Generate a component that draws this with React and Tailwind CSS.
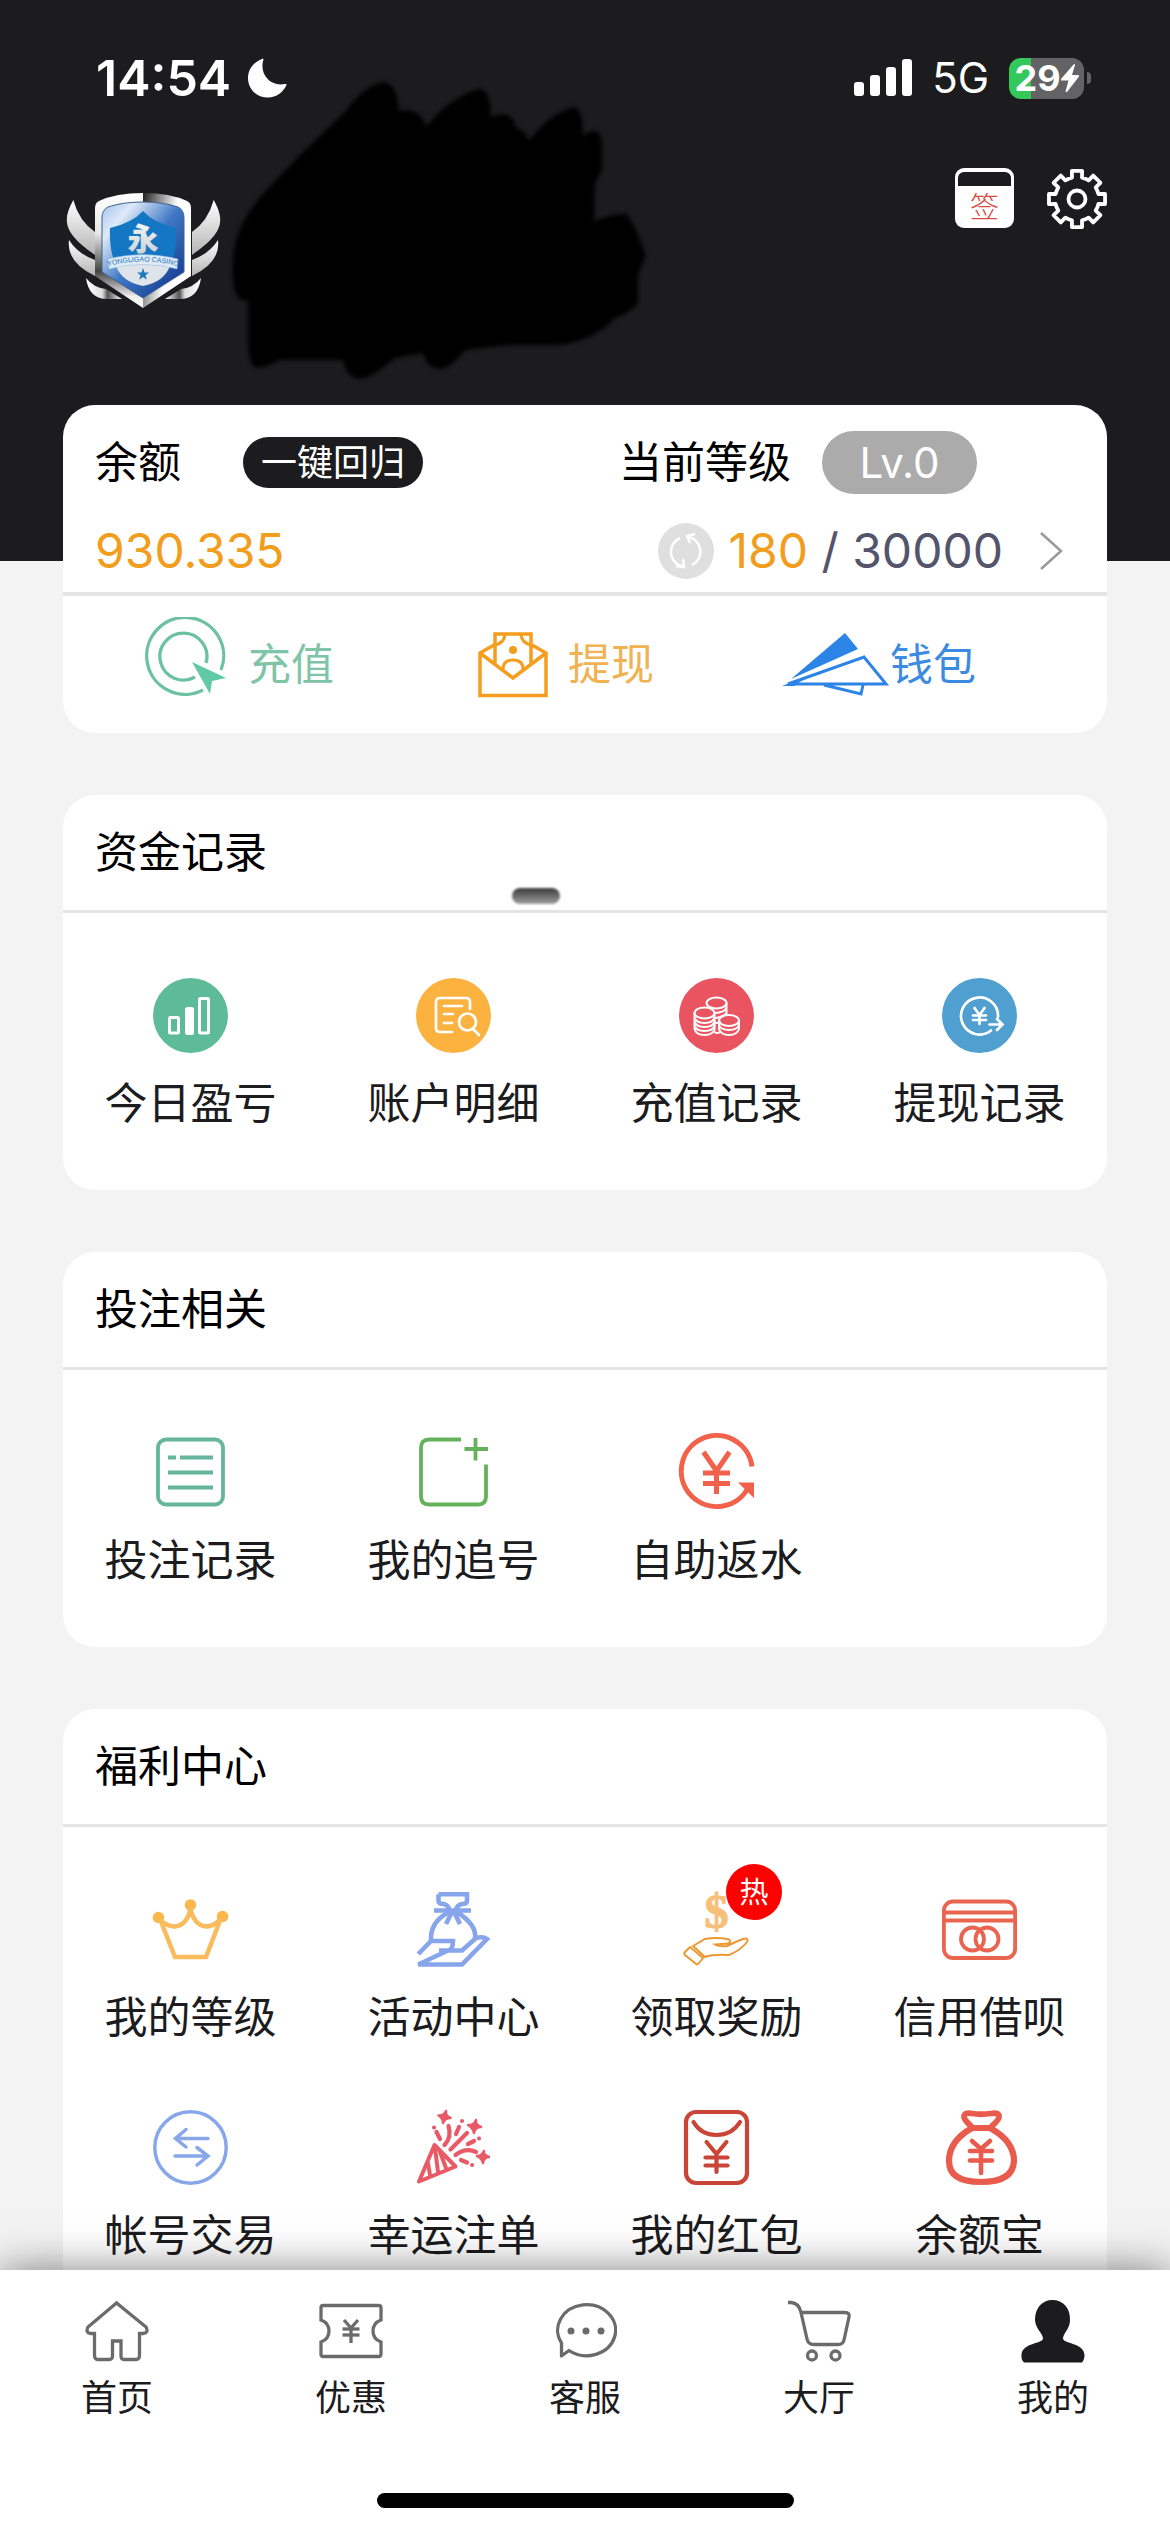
import React from "react";

const latin = "font-['Inter','Noto_Sans_CJK_SC',sans-serif]";

function Yen({ x = 37.5, top, mid, bottom, half, barHalf, bars }) {
  return (
    <>
      <path d={`M${x - half} ${top}L${x} ${mid}L${x + half} ${top}M${x} ${mid}V${bottom}`} />
      {bars.map((y) => (
        <path key={y} d={`M${x - barHalf} ${y}H${x + barHalf}`} />
      ))}
    </>
  );
}

function Icon({ children, color, sw = 3, cap = "butt" }) {
  return (
    <svg
      viewBox="0 0 75 75"
      className="size-[75px] shrink-0 overflow-visible"
      fill="none"
      stroke={color}
      strokeWidth={sw}
      strokeLinecap={cap}
      aria-hidden="true"
    >
      {children}
    </svg>
  );
}

function Disc({ fill, children, sw = 2.7 }) {
  return (
    <Icon color="#fff" sw={sw} cap="round">
      <circle cx="37.5" cy="37.5" r="37.5" fill={fill} stroke="none" />
      {children}
    </Icon>
  );
}

const ProfitIcon = () => (
  <Disc fill="#5dbb9a" sw={3}>
    <rect x="16.5" y="39.5" width="9" height="15.5" rx="1" />
    <rect x="33.5" y="30.500" width="6" height="25" rx="1" fill="#fff" />
    <rect x="46.5" y="20.5" width="9" height="34.5" rx="1" />
  </Disc>
);
const DetailIcon = () => (
  <Disc fill="#fbb23f">
    <path d="M54 31V24q0-4-4-4H24q-4 0-4 4V50q0 4 4 4H36M28 28H46M28 36H37M28 45H36" />
    <circle cx="51.5" cy="44" r="8.500" />
    <path d="M57 51L63 57" />
  </Disc>
);
const CoinsIcon = () => (
  <Disc fill="#e95460" sw={2}>
    <path d="M47.5 25V36M47.5 30Q45 34.500 36 35M47.5 35Q44 39 37 40M35.5 35V51M37 45Q40 45 41 44" />
    <ellipse cx="37.5" cy="25" rx="10" ry="5.5" />
    <ellipse cx="25.5" cy="35" rx="10" ry="5.5" />
    <path d="M15.5 35V51Q17 57 25.5 57T35.5 51M15.5 39.5Q17 45 25.5 45T35.5 39.5M15.5 43.5Q17 49 25.5 49T35.5 43.5M15.5 47.5Q17 53 25.5 53T35.5 47.5" />
    <ellipse cx="50" cy="42.5" rx="10" ry="5.5" />
    <path d="M40 42.5V51Q42 57 50 57T60 51V42.5M40 47Q42 52 50 52T60 47" />
    <path d="M35.5 54Q38 56 41 54" />
  </Disc>
);
const WithdrawLogIcon = () => (
  <Disc fill="#4f9fd0">
    <path d="M56 39A18.5 18.5 0 1 0 49 52.500M47.500 46.5H60M55 41L60.5 46.5L55 52" />
    <Yen top={30} mid={37} bottom={46} half={5} barHalf={6.5} bars={[37.5, 42]} />
  </Disc>
);
const BetLogIcon = () => (
  <Icon color="#65b69c" sw={3.8}>
    <rect x="5" y="4.500" width="65" height="65" rx="8" />
    <path d="M15 22.500H23M27 22.500H60M15 37.500H60M15 52.500H60" />
  </Icon>
);
const ChaseIcon = () => (
  <Icon color="#66b15c" sw={3.8}>
    <path d="M45 4.500H13Q5 4.500 5 12.500V61.500Q5 69.500 13 69.500H62Q70 69.500 70 61.500V29.500M59.5 3V25.500M48.5 14H72" />
  </Icon>
);
const RebateIcon = () => (
  <Icon color="#f2614a" sw={5}>
    <path d="M73 31.500A35.5 35.5 0 1 0 70 51" />
    <path d="M59 47.500H75V63Z" fill="#f2614a" stroke="none" />
    <Yen top={17} mid={36} bottom={59} half={13} barHalf={13.5} bars={[38, 48.5]} />
  </Icon>
);
const CrownIcon = () => (
  <Icon color="#f9bb5b" sw={4.5}>
    <g fill="#fbb64c" stroke="none">
      <circle cx="5.5" cy="25.500" r="5.8" />
      <circle cx="37.5" cy="13" r="5.8" />
      <circle cx="69.5" cy="24.500" r="5.8" />
    </g>
    <path d="M7 27L22 65H53L68 26M8 29Q15 34.500 22 34.500Q34 33 37.5 17Q41 33 53 34.500Q60 34.500 67 28" />
  </Icon>
);
const ActivityIcon = () => (
  <Icon color="#87a5eb" sw={4.6}>
    <path d="M22.5 2.300H51V9Q51 12 46 12Q41 13 40 18M22.5 2.300V9Q22.5 12 28 12Q32 13 33.5 18M18 18.5H55" />
    <path d="M33 20Q14 30 15 48M41 20Q61 33 59 46M36 20L30 32M38 20L44 32" />
    <path d="M2.300 62L15 49H37Q37 58 32 58.500H23M32 58.500H46L60 46Q67 44 71 47L46 72.500H2.300Z" />
  </Icon>
);
const RewardIcon = () => (
  <Icon color="#ed9733" sw={2}>
    <text
      x="37.5"
      y="36"
      fontSize="48"
      textAnchor="middle"
      strokeWidth="1.200"
      stroke="#f6c07a"
      fill="#f6c07a"
      className="font-['Liberation_Serif',serif] font-bold"
    >
      $
    </text>
    <path d="M11 55L6 60Q4.5 61.500 6 63L17 72Q18.500 73 20 71L24 66Z" />
    <path d="M14 54L26 47Q38 45 50 47.500Q53 50 49 51.500L36 52.500Q40 55 48 54Q56 50 64 47Q70 45 68 50Q62 58 50 63Q34 62 26 65Z" />
  </Icon>
);
const CreditIcon = () => (
  <Icon color="#e9654f" sw={3.8}>
    <rect x="1.9" y="9.500" width="71.200" height="56.500" rx="9" />
    <path d="M2 20.500H73M2 28.500H73" />
    <circle cx="30.5" cy="47" r="11.5" />
    <circle cx="45" cy="47" r="11.5" />
  </Icon>
);
const TradeIcon = () => (
  <Icon color="#87a7ea" sw={3.5} cap="round">
    <circle cx="37.5" cy="37.5" r="35.7" />
    <path d="M33 19.500L22.5 28.500L33 37M23 28.500H55M44 37.500L55 46L44 55M22 46H54" />
  </Icon>
);
const PartyIcon = () => (
  <Icon color="#ea5a66" sw={4} cap="round">
    <path d="M3 71.500L18.5 35L39.5 56.500ZM12 53L14 65M19 38L22 62M24 42L30 58" strokeLinejoin="round" />
    <path d="M28.5 35Q36 27 32.5 16M34.500 39.500L51 23M39.5 45Q50 37 60 42M20.500 22L24 29M43 17L40 24M52 34L58 31M45 50L51 52.500" strokeWidth="4.200" />
    <path d="M18 17.500h.1M46 11h.1M63 28.500h.1M56 55h.1" strokeWidth="4" />
    <g fill="#ea5a66" strokeWidth="2.500" strokeLinejoin="round">
      <path d="M30 1Q29 6 34.5 8Q29 8 27 13Q27 8 22.5 5.500Q28 6 30 1Z" />
      <path d="M60 10Q59 15 65 17Q59 17 58 23Q57 18 52 15Q58 16 60 10Z" />
      <path d="M68 41Q67 45 73 47Q68 47 67 53Q66 48 61 46Q66 46 68 41Z" />
    </g>
  </Icon>
);
const RedPacketIcon = () => (
  <Icon color="#c94538" sw={4.2} cap="round">
    <rect x="7" y="2" width="61" height="71" rx="10" />
    <path d="M14.5 12Q22 25 37.5 25T61 12" />
    <Yen top={32} mid={44} bottom={62} half={10} barHalf={11} bars={[47.5, 55.5]} />
  </Icon>
);
const SavingsIcon = () => (
  <Icon color="#e95b4c" sw={4.6} cap="round">
    <path
      d="M29 16Q20 8 22.5 5Q24 2.500 30 3.500Q39 5 49 3.500Q56 2.500 57 5.500Q58 9 50 16"
      strokeWidth="5.800"
    />
    <path
      d="M30 18Q7 31 7 51Q7 72 39 72T72 51Q72 31 48 18Z"
      strokeWidth="6.200"
      strokeLinejoin="round"
    />
    <Yen x={39} top={31} mid={39} bottom={63} half={9} barHalf={11} bars={[41, 50.5]} />
  </Icon>
);

const sections = [
  {
    title: "资金记录",
    smudge: true,
    items: [
      ["今日盈亏", ProfitIcon],
      ["账户明细", DetailIcon],
      ["充值记录", CoinsIcon],
      ["提现记录", WithdrawLogIcon],
    ],
  },
  {
    title: "投注相关",
    items: [
      ["投注记录", BetLogIcon],
      ["我的追号", ChaseIcon],
      ["自助返水", RebateIcon],
    ],
  },
  {
    title: "福利中心",
    items: [
      ["我的等级", CrownIcon],
      ["活动中心", ActivityIcon],
      ["领取奖励", RewardIcon, "热"],
      ["信用借呗", CreditIcon],
      ["帐号交易", TradeIcon],
      ["幸运注单", PartyIcon],
      ["我的红包", RedPacketIcon],
      ["余额宝", SavingsIcon],
    ],
  },
];

function Section({ title, items, smudge }) {
  return (
    <section className="mt-[62px] rounded-[32px] bg-white">
      <div className="relative border-b-[3px] border-[#e4e4e4] px-8 py-[26px]">
        <h2 className="text-[43px] leading-[63px] text-black">{title}</h2>
        {smudge && (
          <span className="absolute top-[93px] left-[449px] h-4 w-12 rounded-[8px] bg-linear-to-b from-[#3c3c3c] to-[#a0a0a0] blur-[1px]" />
        )}
      </div>
      <div className="grid grid-cols-4 gap-x-2 gap-y-[62px] pt-[65px] pb-14">
        {items.map(([label, Glyph, badge]) => (
          <button key={label} type="button" className="flex flex-col items-center gap-5">
            <span className="relative">
              <Glyph />
              {badge && (
                <span className="absolute -top-7 -right-7 flex size-14 items-center justify-center rounded-full bg-[#fe0000] text-[29px] leading-none text-white">
                  {badge}
                </span>
              )}
            </span>
            <span className="text-[43px] leading-[61px] whitespace-nowrap text-[#1c1c1e]">{label}</span>
          </button>
        ))}
      </div>
    </section>
  );
}

function Wing() {
  return (
    <g>
      <path d="M7.3 8C-5 30-1 42 29 63V40Q13 29 7.3 8Z" fill="url(#wing)" />
      <path d="M3 48Q0 70 29 84V68Q12 62 3 48Z" fill="url(#wing)" />
      <path d="M20 86Q23 108 43 107H56L40 97Q28 96 20 86Z" fill="url(#foot)" />
    </g>
  );
}

function Logo() {
  return (
    <svg viewBox="0 0 156 117" className="h-[117px] w-[156px] shrink-0" role="img" aria-label="YONGLIGAO CASINO">
      <defs>
        <linearGradient id="wing" x1="0" y1="0" x2="0" y2="1">
          <stop offset="0" stopColor="#fff" />
          <stop offset="1" stopColor="#b4b4b4" />
        </linearGradient>
        <linearGradient id="foot">
          <stop offset="0" stopColor="#fff" />
          <stop offset=".45" stopColor="#ddd" />
          <stop offset=".6" stopColor="#555" />
          <stop offset="1" stopColor="#fff" />
        </linearGradient>
        <linearGradient id="rimLeft" x1="0" y1="0" x2="0" y2="1">
          <stop offset="0" stopColor="#fff" />
          <stop offset=".35" stopColor="#e8e8e8" />
          <stop offset=".68" stopColor="#444" />
          <stop offset=".9" stopColor="#eee" />
          <stop offset="1" stopColor="#fff" />
        </linearGradient>
        <linearGradient id="rimRight" x1="0" y1="0" x2="1" y2=".4">
          <stop offset="0" stopColor="#222" />
          <stop offset=".4" stopColor="#aaa" />
          <stop offset=".65" stopColor="#fff" />
        </linearGradient>
        <linearGradient id="field" x1="0" y1="0" x2="1" y2="1">
          <stop offset="0" stopColor="#9fc3ec" />
          <stop offset=".2" stopColor="#dfeaf8" />
          <stop offset=".5" stopColor="#3f79c6" />
          <stop offset="1" stopColor="#0a2c86" />
        </linearGradient>
        <linearGradient id="mark" x1="0" y1="0" x2="0" y2="1">
          <stop offset="0" stopColor="#fff" />
          <stop offset="1" stopColor="#c8ccd2" />
        </linearGradient>
        <path id="ribbon" d="M43 74Q77 65 111 74" />
      </defs>
      <Wing />
      <g transform="translate(155 0) scale(-1 1)">
        <Wing />
      </g>
      <path d="M77 1Q50 1 33 9Q29 11 29 16V84L77 116Z" fill="url(#rimLeft)" />
      <path d="M77 1Q104 1 121 9Q125 11 125 16V84L77 116Z" fill="url(#rimRight)" />
      <path
        d="M77 10Q57 10 42 15Q36 18 36 26V80L77 106L118 80V26Q118 18 112 15Q97 10 77 10Z"
        fill="url(#field)"
        stroke="#41628f"
      />
      <path d="M77 19Q66 31 44 36Q42 86 77 94Q112 86 110 36Q88 31 77 19Z" fill="#1477c4" />
      <path d="M50 74Q56 90 77 94Q98 90 104 74Q77 66 50 74Z" fill="#dfe3ea" />
      <path d="M42 67Q77 58 112 67L111 77Q77 68 43 77Z" fill="#dcebf6" stroke="#8fb9dc" strokeWidth=".5" />
      <text
        x="77"
        y="58"
        textAnchor="middle"
        fontSize="31"
        fill="url(#mark)"
        className="font-['Noto_Sans_CJK_SC',sans-serif] font-black"
      >
        永
      </text>
      <text fontSize="7" fill="#2c74b8" className="font-['Liberation_Sans',sans-serif]">
        <textPath href="#ribbon" startOffset="50%" textAnchor="middle">
          YONGLIGAO CASINO
        </textPath>
      </text>
      <path d="M77 76L78.500 80.500H83L79.500 83.300L80.800 87.800L77 85L73.200 87.800L74.500 83.300L71 80.500H75.500Z" fill="#1f78be" />
    </svg>
  );
}

function Scribble() {
  return (
    <svg
      viewBox="228 76 424 310"
      className="pointer-events-none absolute top-[76px] left-[228px] h-[310px] w-[424px] overflow-visible blur-[2px]"
      aria-hidden="true"
    >
      <path
        fill="#000"
        d="M254 367Q248 360 248 335V300Q238 304 234 288Q231 270 234 250Q237 225 262 195L300 155L345 112Q365 84 384 82Q397 84 399 111Q420 107 426 127Q448 99 478 89Q491 88 491 117Q512 108 516 128Q526 131 529 141Q548 115 573 107Q583 107 583 136Q601 122 602 145V170L595 183L594 222Q608 214 627 214L636 230L646 255L638 275V303Q632 312 615 318Q595 340 560 345H510L465 350Q450 369 440 369Q427 368 423 353L395 358Q370 379 358 379Q346 376 343 360H280Q262 370 254 367Z"
      />
    </svg>
  );
}

function StatusBar() {
  return (
    <div className="flex h-[60px] items-center pr-[79px] pl-24 text-white">
      <span className="text-[50px] leading-[60px] font-semibold">14:54</span>
      <svg viewBox="0 0 40 40" className="ml-4 size-10" fill="#fff" aria-hidden="true">
        <path d="M15 1Q16 0 16.500 1.500C12 15 22 29 38 26Q40 25.500 39.500 27C36 34.500 29.500 39.500 21 39.500C9.500 39.500 1 31 1 20C1 11.500 6 4.500 15 1Z" />
      </svg>
      <svg viewBox="0 0 58 38" className="ml-auto h-[38px] w-[58px]" fill="#fff" aria-hidden="true">
        <rect x="0" y="23" width="10" height="14" rx="3" />
        <rect x="16" y="16" width="10" height="21" rx="3" />
        <rect x="32" y="8" width="10" height="29" rx="3" />
        <rect x="48" y="0" width="10" height="37" rx="3" />
      </svg>
      <span className="ml-5 text-[42px] leading-[60px]">5G</span>
      <span className="ml-5 flex h-[41px] w-[75px] items-center justify-center overflow-hidden rounded-[12px] bg-[linear-gradient(90deg,#34c759_29%,#636365_29%)] text-[36px] leading-none font-bold">
        29
        <svg viewBox="0 0 18 28" className="h-7 w-[18px]" fill="#fff" aria-hidden="true">
          <path d="M13 0L0 15Q-.5 16.500 1 16.500H7.500L4.500 27.500Q5 28.500 6 28L18 12.500Q18.500 11 17 11H11L14 1Q14 0 13 0Z" />
        </svg>
      </span>
      <span className="ml-[3px] h-3 w-1 rounded-r-full bg-[#636365]" />
    </div>
  );
}

function GearIcon() {
  const teeth = [];
  const root = 22;
  const tip = 28.5;
  for (let i = 0; i < 8; i++) {
    const a = (i * Math.PI) / 4;
    const p = (r, d) => `${31 + r * Math.sin(a + d)} ${31 - r * Math.cos(a + d)}`;
    teeth.push(`${p(root, -0.23)}L${p(tip, -0.18)}L${p(tip, 0.18)}L${p(root, 0.23)}`);
  }
  return (
    <svg viewBox="0 0 62 62" className="size-[62px]" fill="none" stroke="#fff" strokeWidth="3.8" strokeLinejoin="round" aria-hidden="true">
      <path d={`M${teeth.join(`A${root} ${root} 0 0 1 `)}A${root} ${root} 0 0 1 ${31 + root * Math.sin(-0.23)} ${31 - root * Math.cos(0.23)}Z`} />
      <circle cx="31" cy="31" r="8.5" />
    </svg>
  );
}

function BalanceCard() {
  return (
    <section className="-mt-[156px] rounded-[32px] bg-white">
      <div className="border-b-4 border-[#e4e4e4] pt-[26px] pb-[13px] pl-8">
        <div className="flex h-[63px] items-center pr-[130px] text-[43px] leading-none text-black">
          <span>余额</span>
          <button type="button" className="ml-[62px] h-[51px] rounded-full bg-[#1c1c1e] px-[18px] text-[36px] leading-none text-white">
            一键回归
          </button>
          <span className="ml-auto">当前等级</span>
          <span className="ml-[31px] flex h-[63px] w-[155px] items-center justify-center rounded-full bg-[#ababab] text-[42px] text-white">
            Lv.0
          </span>
        </div>
        <div className="mt-[29px] flex h-14 items-center pr-11 text-[48px] leading-none text-[#54546c]">
          <span className="text-[#f39d1d]">930.335</span>
          <button type="button" aria-label="刷新" className="ml-auto size-14 rounded-full bg-[#dfdfdf]">
            <svg viewBox="0 0 56 56" className="size-14" fill="none" stroke="#fff" strokeWidth="2.5" aria-hidden="true">
              <path d="M22 15A15 15 0 0 0 23 43M34 42A15 15 0 0 0 31 14M18 43L26 44L25 36M37 11L29 13L32 20" />
            </svg>
          </button>
          <span className="ml-[14px] whitespace-pre">
            <span className="text-[#f39d1d]">180</span> / 30000
          </span>
          <svg viewBox="0 0 24 40" className="ml-9 h-10 w-6" fill="none" stroke="#999" strokeWidth="2.5" aria-hidden="true">
            <path d="M2 2L22 20L2 38" />
          </svg>
        </div>
      </div>
      <div className="flex h-[137px] items-center pl-20 text-[43px] leading-none">
        <button type="button" className="flex items-center gap-5 text-[#80c4a8]">
          <svg viewBox="0 0 85 96" className="h-24 w-[85px]" fill="none" stroke="#6cc1a2" strokeWidth="3.3" aria-hidden="true">
            <path d="M78 53A38.500 38.500 0 1 0 60 73M63 46A23.500 23.500 0 1 0 52 60" />
            <path d="M49 45L83 61L69 64L67 77Z" fill="#5fcaa5" stroke="none" />
          </svg>
          充值
        </button>
        <button type="button" className="ml-36 flex items-center gap-5 text-[#f0b252]">
          <svg viewBox="0 0 70 66" className="h-[66px] w-[70px]" fill="none" stroke="#f59d1c" strokeWidth="3.5" aria-hidden="true">
            <path d="M16 13L2 21V63.500H68V21L54 13M2 21L35 46L68 21M17 31V2H53V31" />
            <path d="M27 3Q26 11 17 13M43 3Q44 11 53 13M25 37Q25 28 35 28T45 37" strokeWidth="3" />
            <circle cx="35" cy="18" r="4" fill="#f59d1c" stroke="none" />
          </svg>
          提现
        </button>
        <button type="button" className="ml-32 flex items-center text-[#3b8be2]">
          <svg viewBox="0 0 108 64" className="h-16 w-[108px]" fill="none" stroke="#2b84e6" strokeWidth="3" aria-hidden="true">
            <path d="M63 0L76 16L9 46Z" fill="#2b84e6" stroke="none" />
            <path d="M6 51L82 24L104 51ZM42 52L79 61L81 52" />
            <path d="M0 53L28 42L12 53Z" fill="#2b84e6" stroke="none" />
          </svg>
          钱包
        </button>
      </div>
    </section>
  );
}

const tabs = [
  [
    "首页",
    <path d="M31.5 3L3 27Q0 33 6 33.500H9.500V55Q9.500 59.500 13 59.500H24Q27.500 59.500 27.500 56V41H36V56Q36 59.500 39 59.500H51Q54.500 59.500 54.500 55V33.500H58Q64 33 61 27Z" />,
  ],
  [
    "优惠",
    <>
      <path d="M2 20V8Q2 5.500 4 5.500H59.500Q62 5.500 62 8V20Q54 23 54 31T62 42V54Q62 56.500 59.500 56.500H4Q2 56.500 2 54V42Q10 39 10 31T2 20Z" />
      <Yen x={32} top={20} mid={28} bottom={43} half={7} barHalf={8.5} bars={[29, 35]} />
    </>,
  ],
  [
    "客服",
    <>
      <path d="M8.500 56V43A29 25.500 0 1 1 16 50.500Z" strokeLinejoin="round" />
      <g fill="#6b6b6b" stroke="none">
        <circle cx="18" cy="31" r="3.5" />
        <circle cx="33" cy="31" r="3.5" />
        <circle cx="48" cy="31" r="3.5" />
      </g>
    </>,
  ],
  [
    "大厅",
    <>
      <path d="M1 2.500H4Q12 3 14 12.500H58Q63 12.500 62 17L57 40Q56 44.500 51 44.500H27Q21 44.500 20 39L14 12.500" />
      <circle cx="25" cy="55.500" r="4.500" />
      <circle cx="48.5" cy="55.500" r="4.500" />
    </>,
  ],
  [
    "我的",
    <path
      d="M31.5 0C42 0 49.500 8 49 20C49 29 42 33 42 39C44 44 63 43 63.500 55Q63.500 60 61 62.500H3Q0 60 .5 55C1 43 20 44 22 39C22 33 14.500 29 14 20C14 8 21 0 31.5 0Z"
      fill="#1c1c1e"
      stroke="none"
    />,
  ],
];

export default function App() {
  return (
    <div className={`flex h-screen flex-col bg-[#f3f3f3] ${latin}`}>
      <main className="min-h-0 flex-1 overflow-y-auto [scrollbar-width:none]">
        <header className="relative bg-[#1c1c1e] pt-12 pb-[252px]">
          <StatusBar />
          <div className="mt-[60px] flex items-start pr-[62px] pl-[66px]">
            <div className="mt-6">
              <Logo />
            </div>
            <button
              type="button"
              className="ml-auto flex h-[60px] w-[59px] flex-col overflow-hidden rounded-[9px] bg-white px-[3px] pt-1 text-[29px] leading-none font-light text-[#d8483e]"
            >
              <span className="h-[14px] w-full rounded-t-[6px] bg-[#1c1c1e]" />
              <span className="flex w-full flex-1 items-center justify-center">签</span>
            </button>
            <button type="button" aria-label="设置" className="ml-8">
              <GearIcon />
            </button>
          </div>
          <Scribble />
        </header>
        <div className="relative px-[63px] pb-[62px]">
          <BalanceCard />
          {sections.map((s) => (
            <Section key={s.title} {...s} />
          ))}
        </div>
      </main>
      <nav className="relative bg-white pt-[30px] pb-6 shadow-[0_0_40px_rgba(0,0,0,0.5)]">
        <div className="grid grid-cols-5">
          {tabs.map(([label, art]) => (
            <a key={label} href="#" className="flex flex-col items-center gap-2 text-[36px] leading-[54px] text-[#1c1c1e]">
              <svg viewBox="0 0 64 63" className="h-[63px] w-16" fill="none" stroke="#6b6b6b" strokeWidth="3.3" aria-hidden="true">
                {art}
              </svg>
              {label}
            </a>
          ))}
        </div>
        <div className="mx-auto mt-[68px] h-[15px] w-[417px] rounded-full bg-black" />
      </nav>
    </div>
  );
}
